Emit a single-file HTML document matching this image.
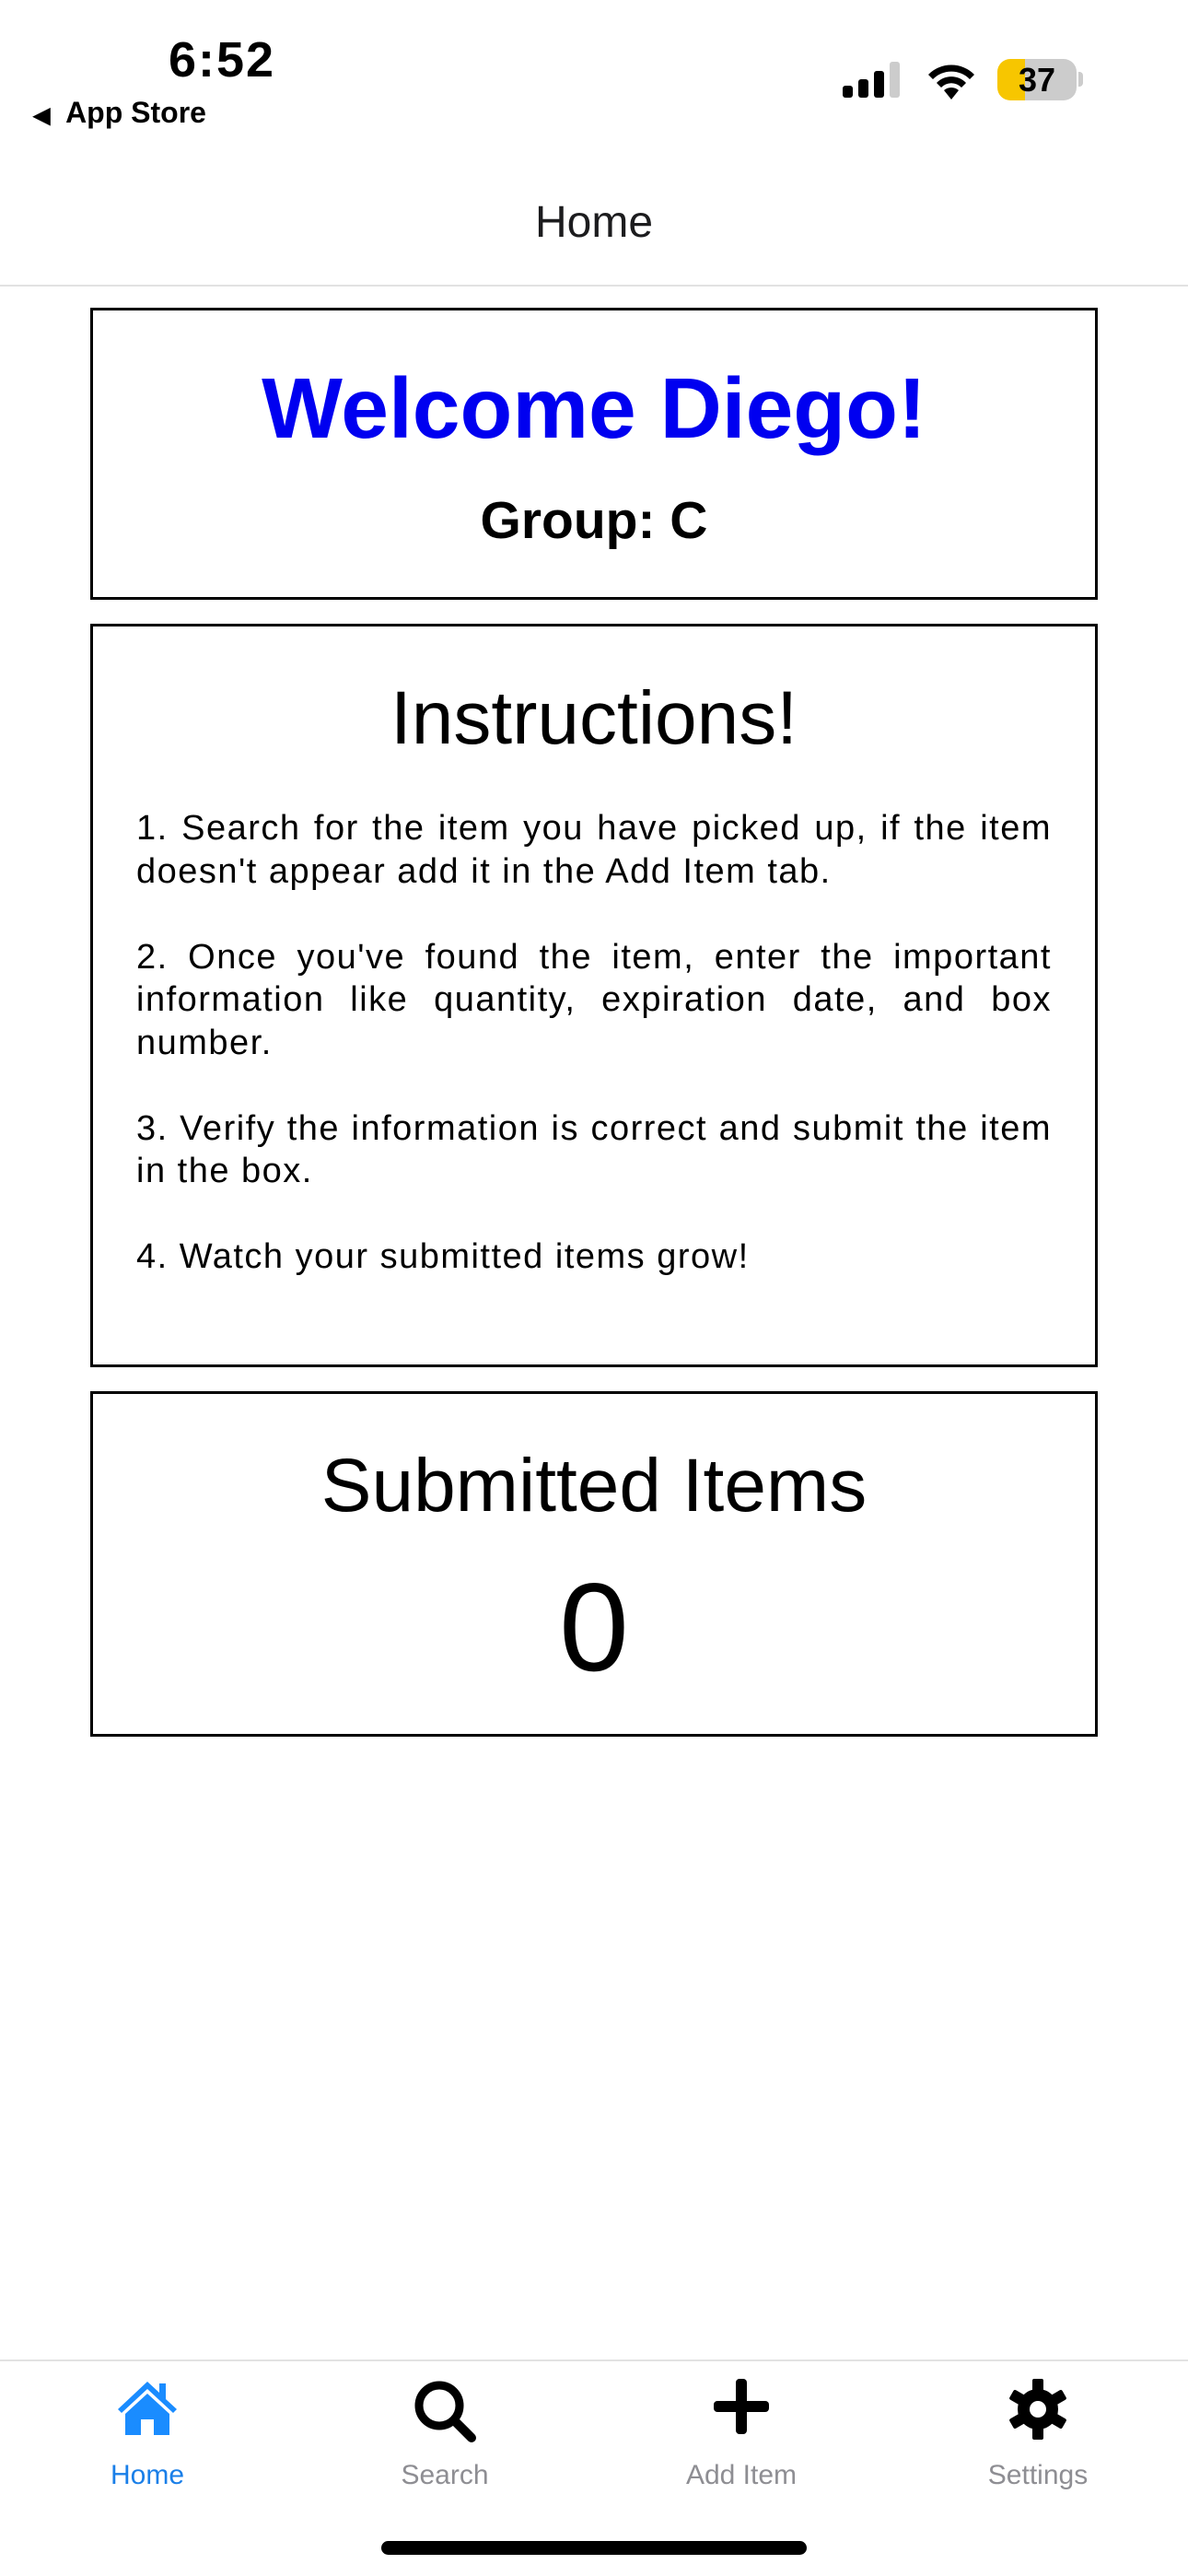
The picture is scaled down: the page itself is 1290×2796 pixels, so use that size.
<!DOCTYPE html>
<html><head><meta charset="utf-8"><style>
*{margin:0;padding:0;box-sizing:border-box}
body{width:1290px;height:2796px;background:#fff;position:relative;font-family:"Liberation Sans",sans-serif;color:#000;overflow:hidden}
.a{position:absolute}
.box{position:absolute;left:98px;width:1094px;border:3px solid #000}
.c{position:absolute;left:0;width:1290px;text-align:center;white-space:nowrap}
.p{position:absolute;left:148px;width:994px;font-size:38px;line-height:46.5px;text-align:justify;letter-spacing:1.5px}
.p div{margin-bottom:46.5px}
.tab{position:absolute;width:240px;text-align:center;font-size:30px;color:#8e8e93;top:2670px}
</style></head><body>
<div class="a" style="left:183px;top:34px;font-size:54px;font-weight:bold;letter-spacing:2px">6:52</div>
<div class="a" style="left:36px;top:104px;font-size:32px;font-weight:bold"><span style="font-size:24px">◀</span>&nbsp; App Store</div>
<div class="a" style="left:915px;top:93px;width:11px;height:13px;background:#000;border-radius:3px"></div>
<div class="a" style="left:932px;top:86px;width:11px;height:20px;background:#000;border-radius:3px"></div>
<div class="a" style="left:949px;top:77px;width:11px;height:29px;background:#000;border-radius:3px"></div>
<div class="a" style="left:966px;top:67px;width:11px;height:39px;background:#ccc;border-radius:3px"></div>
<svg class="a" style="left:1003px;top:64px" width="60" height="44" viewBox="0 0 60 44"><path d="M30 44 L22 34 A12 12 0 0 1 38 34 Z" fill="#000"/><path d="M14 26 A22 22 0 0 1 46 26 L41 31 A15 15 0 0 0 19 31 Z" fill="#000"/><path d="M5 17 A35 35 0 0 1 55 17 L50 22 A28 28 0 0 0 10 22 Z" fill="#000"/></svg>
<div class="a" style="left:1083px;top:64px;width:86px;height:45px;border-radius:14px;background:linear-gradient(90deg,#f7c600 0 30px,#ccc 30px);"></div>
<div class="a" style="left:1171px;top:78px;width:5px;height:16px;background:#ccc;border-radius:0 4px 4px 0"></div>
<div class="a" style="left:1083px;top:64px;width:86px;height:45px;line-height:45px;text-align:center;font-size:36px;font-weight:bold">37</div>
<div class="c" style="top:214px;font-size:48px;color:#1c1c1e">Home</div>
<div class="a" style="left:0;top:309px;width:1290px;height:2px;background:#e2e2e2"></div>

<div class="box" style="top:334px;height:317px"></div>
<div class="c" style="top:388px;font-size:93px;font-weight:bold;color:#0000f0;line-height:110px">Welcome Diego!</div>
<div class="c" style="top:532px;font-size:57px;font-weight:bold;line-height:66px">Group: C</div>

<div class="box" style="top:677px;height:807px"></div>
<div class="c" style="top:733px;font-size:82px;line-height:94px">Instructions!</div>
<div class="p" style="top:876px">
<div>1. Search for the item you have picked up, if the item doesn't appear add it in the Add Item tab.</div>
<div>2. Once you've found the item, enter the important information like quantity, expiration date, and box number.</div>
<div>3. Verify the information is correct and submit the item in the box.</div>
<div>4. Watch your submitted items grow!</div>
</div>

<div class="box" style="top:1510px;height:375px"></div>
<div class="c" style="top:1566px;font-size:82px;line-height:94px">Submitted Items</div>
<div class="c" style="top:1686px;font-size:136px;line-height:160px">0</div>

<div class="a" style="left:0;top:2561px;width:1290px;height:2px;background:#e2e2e2"></div>
<svg class="a" style="left:126px;top:2583px" width="68" height="60" viewBox="0 0 68 60"><path d="M34 2 L2 32 L6 36 L34 10 L62 36 L66 32 L54 21 L54 4 L47 4 L47 14 Z" fill="#1a8cff"/><path d="M34 15 L10 37 L10 60 L27 60 L27 43 L41 43 L41 60 L58 60 L58 37 Z" fill="#1a8cff"/></svg>
<svg class="a" style="left:448px;top:2582px" width="72" height="72" viewBox="0 0 72 72"><circle cx="29" cy="29" r="22" fill="none" stroke="#000" stroke-width="9"/><line x1="45" y1="45" x2="64" y2="64" stroke="#000" stroke-width="10" stroke-linecap="round"/></svg>
<svg class="a" style="left:775px;top:2582px" width="60" height="60" viewBox="0 0 60 60"><rect x="24" y="0" width="12" height="60" rx="4"/><rect x="0" y="24" width="60" height="12" rx="4"/></svg>
<svg class="a" style="left:1094px;top:2582px" width="66" height="66" viewBox="0 0 66 66"><g fill="#000"><circle cx="33" cy="33" r="22"/><rect x="27" y="0" width="12" height="66" rx="2"/><rect x="27" y="0" width="12" height="66" rx="2" transform="rotate(60 33 33)"/><rect x="27" y="0" width="12" height="66" rx="2" transform="rotate(120 33 33)"/></g><circle cx="33" cy="33" r="9" fill="#fff"/></svg>
<div class="tab" style="left:40px;color:#1a7fe8">Home</div>
<div class="tab" style="left:363px">Search</div>
<div class="tab" style="left:685px">Add Item</div>
<div class="tab" style="left:1007px">Settings</div>
<div class="a" style="left:414px;top:2758px;width:462px;height:15px;background:#000;border-radius:8px"></div>
</body></html>
